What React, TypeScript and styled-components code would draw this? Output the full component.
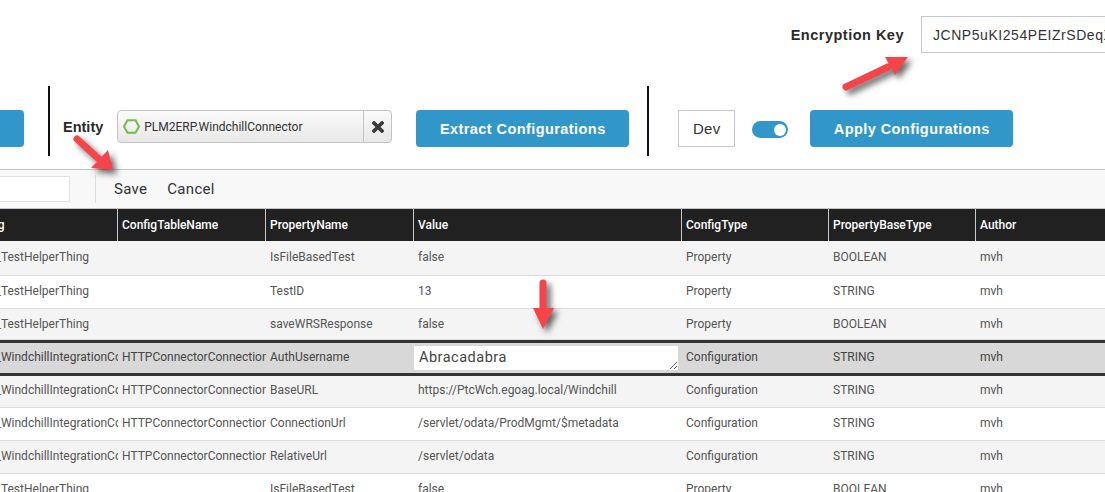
import React from "react";
import styled, { createGlobalStyle } from "styled-components";

const GlobalStyle = createGlobalStyle`
  html, body {
    margin: 0;
    padding: 0;
    background: #fff;
    overflow: hidden;
  }
`;

const Page = styled.div`
  position: relative;
  width: 1105px;
  height: 492px;
  overflow: hidden;
  font-family: "Liberation Sans", Arial, sans-serif;
`;

const KeyRow = styled.div`
  display: flex;
  justify-content: flex-end;
  align-items: center;
  height: 37px;
  padding-top: 16px;
  margin-right: -68px;
  margin-bottom: 33px;
`;

const KeyLabel = styled.span`
  padding-top: 1px;
  font-size: 14.5px;
  font-weight: bold;
  letter-spacing: 0.5px;
  color: #2b2b2b;
  margin-right: 17px;
`;

const KeyInput = styled.div`
  width: 252px;
  height: 37px;
  box-sizing: border-box;
  border: 1px solid #c3c8d2;
  padding: 0 11px;
  display: flex;
  align-items: center;
  font-size: 14px;
  letter-spacing: 0.55px;
  color: #333;
  white-space: nowrap;
  overflow: hidden;
`;

const ActionRow = styled.div`
  display: flex;
  align-items: flex-start;
  height: 70px;
  margin-left: -76px;
  margin-bottom: 13px;
`;

const Divider = styled.div<{ $gap: number }>`
  width: 2px;
  height: 70px;
  margin-left: ${(p) => p.$gap}px;
  background: #111;
`;

const Button = styled.button<{ $width: number; $gap?: number }>`
  width: ${(p) => p.$width}px;
  height: 37px;
  margin-top: 24px;
  margin-left: ${(p) => p.$gap ?? 0}px;
  padding: 0;
  border: none;
  border-radius: 4px;
  background: #3097c8;
  color: #fff;
  font-family: "Liberation Sans", Arial, sans-serif;
  font-size: 14.5px;
  font-weight: bold;
  letter-spacing: 0.43px;
`;

const EntityLabel = styled.span`
  margin: 33px 14px 0 13px;
  font-size: 14.5px;
  font-weight: bold;
  color: #2b2b2b;
`;

const EntityField = styled.div`
  display: flex;
  align-items: stretch;
  width: 275px;
  height: 33px;
  margin-top: 24px;
  box-sizing: border-box;
  border: 1px solid #c4c4c4;
  border-radius: 4px;
  background: linear-gradient(#fafafa, #e8e8e8);
`;

const EntityValue = styled.div`
  flex: 1;
  display: flex;
  align-items: center;
  gap: 4px;
  padding-left: 5px;
  font-family: Roboto, sans-serif;
  font-size: 12px;
  color: #333;
`;

const EntityClear = styled.div`
  width: 27px;
  border-left: 1px solid #c4c4c4;
  display: flex;
  align-items: center;
  justify-content: center;
`;

const DevBox = styled.div`
  width: 57px;
  height: 37px;
  margin: 24px 0 0 29px;
  box-sizing: border-box;
  border: 1px solid #c3c8d2;
  display: flex;
  align-items: center;
  justify-content: center;
  font-size: 15px;
  letter-spacing: 0.3px;
  color: #333;
`;

const Toggle = styled.div`
  width: 36px;
  height: 17px;
  margin: 35px 0 0 17px;
  padding: 0 2px;
  box-sizing: border-box;
  border-radius: 9px;
  background: #3097c8;
  display: flex;
  align-items: center;
  justify-content: flex-end;

  &::after {
    content: "";
    width: 12px;
    height: 12px;
    border-radius: 50%;
    background: #fff;
  }
`;

const Toolbar = styled.div`
  display: flex;
  align-items: center;
  height: 40px;
  box-sizing: border-box;
  border-top: 1px solid #c4c4c4;
  border-bottom: 1px solid #c4c4c4;
  background: #f8f8f8;
  font-family: Roboto, sans-serif;
  font-size: 15px;
  letter-spacing: 0.3px;
  color: #333;
`;

const SearchBox = styled.div`
  width: 71px;
  height: 26px;
  margin-left: -1px;
  box-sizing: border-box;
  border: 1px solid #e2e2e2;
  background: #fff;
`;

const ToolbarSep = styled.div`
  width: 1px;
  height: 28px;
  margin: 0 18px 0 25px;
  background: #dedede;
`;

const ToolbarAction = styled.span`
  margin-right: 20px;
`;

const Table = styled.div`
  margin-left: -30px;
  font-family: Roboto, sans-serif;
  font-size: 12px;
`;

const columns = "148px 148px 148px 268px 147px 147px 160px";

const HeaderRow = styled.div`
  display: grid;
  grid-template-columns: ${columns};
  height: 32px;
  background: #212121;
  color: #fff;
  font-weight: 500;
`;

const HeaderCell = styled.div`
  display: flex;
  align-items: center;
  padding-left: 4px;
  border-right: 1px solid #c8c8c8;
  box-sizing: border-box;
  &:last-child {
    border-right: none;
  }
`;

const Row = styled.div<{ $tone: Tone; $height: number }>`
  display: grid;
  grid-template-columns: ${columns};
  height: ${(p) => p.$height}px;
  box-sizing: border-box;
  color: ${(p) => (p.$tone === "active" ? "#444" : "#555")};
  background: ${(p) =>
    p.$tone === "active" ? "#d8d8d8" : p.$tone === "odd" ? "#f4f4f4" : "#fff"};
  border-top: ${(p) => (p.$tone === "active" ? "3px solid #333" : "none")};
  border-bottom: ${(p) =>
    p.$tone === "active" ? "3px solid #333" : "1px solid #dcdcdc"};
`;

const Cell = styled.div<{ $pad: number }>`
  padding: ${(p) => p.$pad}px 0 0 4px;
  line-height: 14px;
  overflow: hidden;
  white-space: nowrap;
  &:first-child {
    padding-left: 1px;
  }
`;

const EditArea = styled.div`
  width: 264px;
  height: 24px;
  box-sizing: border-box;
  margin: -4px 0 0 -4px;
  padding: 3px 5px;
  background: #fff;
  font-size: 14.5px;
  letter-spacing: 0.5px;
  line-height: 18px;
  color: #444;
  overflow: hidden;
  resize: both;
`;

const ArrowLayer = styled.svg`
  position: absolute;
  left: 0;
  top: 0;
  pointer-events: none;
  filter: drop-shadow(4px 4px 3px rgba(0, 0, 0, 0.6));
`;

type Tone = "odd" | "even" | "active";

interface RowData {
  thing: string;
  table: string;
  prop: string;
  value: string;
  type: string;
  base: string;
  tone: Tone;
  height: number;
  pad: number;
}

const helper = "PLM_TestHelperThing";
const wind = "PLM_WindchillIntegrationConnector";
const conn = "HTTPConnectorConnectionSettings";

const rows: RowData[] = [
  { thing: helper, table: "", prop: "IsFileBasedTest", value: "false", type: "Property", base: "BOOLEAN", tone: "odd", height: 35, pad: 9 },
  { thing: helper, table: "", prop: "TestID", value: "13", type: "Property", base: "STRING", tone: "even", height: 33, pad: 8 },
  { thing: helper, table: "", prop: "saveWRSResponse", value: "false", type: "Property", base: "BOOLEAN", tone: "odd", height: 31, pad: 8 },
  { thing: wind, table: conn, prop: "AuthUsername", value: "Abracadabra", type: "Configuration", base: "STRING", tone: "active", height: 36, pad: 7 },
  { thing: wind, table: conn, prop: "BaseURL", value: "https://PtcWch.egoag.local/Windchill", type: "Configuration", base: "STRING", tone: "odd", height: 32, pad: 7 },
  { thing: wind, table: conn, prop: "ConnectionUrl", value: "/servlet/odata/ProdMgmt/$metadata", type: "Configuration", base: "STRING", tone: "even", height: 33, pad: 8 },
  { thing: wind, table: conn, prop: "RelativeUrl", value: "/servlet/odata", type: "Configuration", base: "STRING", tone: "odd", height: 33, pad: 8 },
  { thing: helper, table: "", prop: "IsFileBasedTest", value: "false", type: "Property", base: "BOOLEAN", tone: "even", height: 33, pad: 8 },
];

const headers = [
  "Thing",
  "ConfigTableName",
  "PropertyName",
  "Value",
  "ConfigType",
  "PropertyBaseType",
  "Author",
];

const App = () => {
  return (
    <Page>
      <GlobalStyle />
      <KeyRow>
        <KeyLabel>Encryption Key</KeyLabel>
        <KeyInput>JCNP5uKI254PEIZrSDeqXb7Lm2</KeyInput>
      </KeyRow>

      <ActionRow>
        <Button $width={100} />
        <Divider $gap={24} />
        <EntityLabel>Entity</EntityLabel>
        <EntityField>
          <EntityValue>
            <svg width="17" height="15" viewBox="0 0 17 15">
              <path
                d="M4.500 1.200h8L16 7.500l-3.500 6.300h-8L1 7.500z"
                fill="none"
                stroke="#6cc04a"
                strokeWidth="2"
              />
            </svg>
            PLM2ERP.WindchillConnector
          </EntityValue>
          <EntityClear>
            <svg width="12" height="12" viewBox="0 0 12 12">
              <path
                d="M2 2l8 8M10 2l-8 8"
                stroke="#3a3a3a"
                strokeWidth="3.800"
                strokeLinecap="round"
              />
            </svg>
          </EntityClear>
        </EntityField>
        <Button $width={213} $gap={24}>
          Extract Configurations
        </Button>
        <Divider $gap={18} />
        <DevBox>Dev</DevBox>
        <Toggle />
        <Button $width={203} $gap={22}>
          Apply Configurations
        </Button>
      </ActionRow>

      <Toolbar>
        <SearchBox />
        <ToolbarSep />
        <ToolbarAction>Save</ToolbarAction>
        <ToolbarAction>Cancel</ToolbarAction>
      </Toolbar>

      <Table>
        <HeaderRow>
          {headers.map((h) => (
            <HeaderCell key={h}>{h}</HeaderCell>
          ))}
        </HeaderRow>
        {rows.map((r, i) => (
          <Row key={i} $tone={r.tone} $height={r.height}>
            <Cell $pad={r.pad}>{r.thing}</Cell>
            <Cell $pad={r.pad}>{r.table}</Cell>
            <Cell $pad={r.pad}>{r.prop}</Cell>
            <Cell $pad={r.pad}>
              {r.tone === "active" ? <EditArea>{r.value}</EditArea> : r.value}
            </Cell>
            <Cell $pad={r.pad}>{r.type}</Cell>
            <Cell $pad={r.pad}>{r.base}</Cell>
            <Cell $pad={r.pad}>mvh</Cell>
          </Row>
        ))}
      </Table>

      <ArrowLayer width="1105" height="492" viewBox="0 0 1105 492">
        <g fill="#f6454a" stroke="#f6454a" strokeLinecap="round">
          <path d="M77 139L100 160" strokeWidth="7" fill="none" />
          <path d="M113 170L91 168L108 150z" stroke="none" />
          <path d="M846 87L888 67" strokeWidth="7" fill="none" />
          <path d="M908 57L885 57L895 75z" stroke="none" />
          <path d="M543 283L543 310" strokeWidth="7" fill="none" />
          <path d="M543 329L533 308L554 308z" stroke="none" />
        </g>
      </ArrowLayer>
    </Page>
  );
};

export default App;
